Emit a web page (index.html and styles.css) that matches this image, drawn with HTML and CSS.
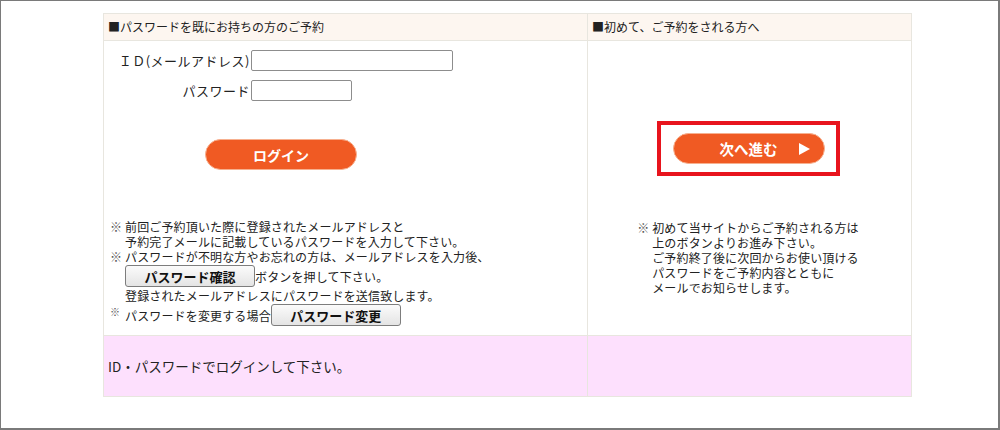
FILE: index.html
```html
<!DOCTYPE html>
<html lang="ja">
<head>
    <meta charset="UTF-8">
    <title>ご予約ログイン</title>
    <link rel="stylesheet" href="styles.css">
</head>
<body>
    <div class="screen">
        <table class="login-table">
            <colgroup>
                <col class="col-left">
                <col class="col-right">
            </colgroup>
            <tr class="head-row">
                <th>■パスワードを既にお持ちの方のご予約</th>
                <th>■初めて、ご予約をされる方へ</th>
            </tr>
            <tr class="body-row">
                <td>
                    <div class="form-row">
                        <label for="mail">ＩＤ(メールアドレス)</label>
                        <input id="mail" class="mail" type="text">
                    </div>
                    <div class="form-row">
                        <label for="pass">パスワード</label>
                        <input id="pass" class="pass" type="password">
                    </div>
                    <button class="orange-btn login">ログイン</button>

                    <div class="notes">
                        <div class="note">
                            <span class="mark">※</span>
                            <div class="note-body">
                                <div class="line">前回ご予約頂いた際に登録されたメールアドレスと</div>
                                <div class="line">予約完了メールに記載しているパスワードを入力して下さい。</div>
                            </div>
                        </div>
                        <div class="note">
                            <span class="mark">※</span>
                            <div class="note-body">
                                <div class="line">パスワードが不明な方やお忘れの方は、メールアドレスを入力後、</div>
                                <div class="line btn-line"><button class="gray-btn">パスワード確認</button>ボタンを押して下さい。</div>
                                <div class="line">登録されたメールアドレスにパスワードを送信致します。</div>
                            </div>
                        </div>
                        <div class="note">
                            <span class="mark small">※</span>
                            <div class="note-body">
                                <div class="line btn-line">パスワードを変更する場合<button class="gray-btn">パスワード変更</button></div>
                            </div>
                        </div>
                    </div>
                </td>
                <td class="first-cell">
                    <div class="next-frame">
                        <button class="orange-btn next">次へ進む
                            <svg class="arrow" width="12" height="12" viewBox="0 0 12 12"><polygon points="1,0 12,6 1,12" fill="#fff"/></svg>
                        </button>
                    </div>
                    <div class="first-notes">
                        <div class="note">
                            <span class="mark">※</span>
                            <div class="note-body">
                                <div class="line">初めて当サイトからご予約される方は</div>
                                <div class="line">上のボタンよりお進み下さい。</div>
                                <div class="line">ご予約終了後に次回からお使い頂ける</div>
                                <div class="line">パスワードをご予約内容とともに</div>
                                <div class="line">メールでお知らせします。</div>
                            </div>
                        </div>
                    </div>
                </td>
            </tr>
            <tr class="msg-row">
                <td>ID・パスワードでログインして下さい。</td>
                <td></td>
            </tr>
        </table>
    </div>
</body>
</html>
```

FILE: styles.css
```css
body{
    margin: 0;
    font-family: "Noto Sans CJK JP", sans-serif;
    color: #222;
    background: #fff;
}
.screen{
    height: 430px;
    box-sizing: border-box;
    border: solid #7a7a7a;
    border-width: 1px 2px 2px 1px;
    padding-top: 12px;
}

.login-table{
    margin-left: 102px;
    width: 808px;
    border-collapse: collapse;
    table-layout: fixed;
}
.col-left{
    width: 484px;
}
.col-right{
    width: 324px;
}
.login-table th,
.login-table td{
    border: 1px solid #e8e6df;
    padding: 0;
    vertical-align: top;
}

.head-row th{
    height: 26px;
    background-color: #fdf6f0;
    font-size: 12px;
    font-weight: normal;
    text-align: left;
    line-height: 26px;
    padding-left: 4px;
}

.body-row td{
    height: 294px;
}

.form-row{
    display: flex;
    align-items: center;
    margin-top: 9px;
}
.form-row label{
    width: 146px;
    text-align: right;
    font-size: 13px;
    letter-spacing: 0.5px;
    padding-right: 1px;
}
.form-row input{
    height: 21px;
    box-sizing: border-box;
    border: 1px solid #8d8d8d;
    border-radius: 2px;
    padding: 1px 4px;
    font-size: 12px;
}
.mail{
    width: 202px;
}
.pass{
    width: 101px;
}

.orange-btn{
    display: block;
    width: 152px;
    height: 31px;
    border: 1px solid #f7b08f;
    border-radius: 16px;
    background-color: #f05a23;
    color: #fff;
    font-family: "Noto Sans CJK JP", sans-serif;
    font-size: 14px;
    font-weight: bold;
    cursor: pointer;
}
.login{
    margin: 38px 0 0 101px;
}

.notes{
    margin-top: 49px;
    padding-left: 6px;
}
.note{
    display: flex;
    font-size: 12px;
    line-height: 15px;
    letter-spacing: 0.15px;
}
.mark{
    width: 15px;
    flex: none;
    color: #555;
}
.mark.small{
    font-size: 10px;
    line-height: 18px;
}
.btn-line{
    display: flex;
    align-items: center;
    height: 24px;
}
.gray-btn{
    width: 130px;
    height: 22px;
    padding: 0;
    border: 1px solid #7d7d7d;
    border-radius: 3px;
    background: linear-gradient(#fbfbfb, #e4e4e4);
    font-family: "Noto Sans CJK JP", sans-serif;
    font-size: 13px;
    font-weight: bold;
    color: #111;
}

.first-cell{
    text-align: center;
}
.next-frame{
    display: inline-block;
    margin: 80px 3px 0 0;
    border: 4px solid #e8141d;
    padding: 8px 11px 8px 12px;
}
.next{
    position: relative;
    font-size: 14.5px;
}
.arrow{
    position: absolute;
    right: 14px;
    top: 9px;
}
.first-notes{
    display: inline-block;
    text-align: left;
    margin: 44px 3px 0 0;
}

.msg-row td{
    height: 60px;
    background-color: #fde0fd;
    font-size: 13.5px;
    line-height: 60px;
    padding-left: 4px;
    vertical-align: middle;
}
```
